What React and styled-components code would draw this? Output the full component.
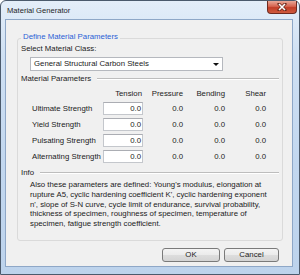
import React from "react";
import styled, { createGlobalStyle } from "styled-components";

const GlobalStyle = createGlobalStyle`
  html, body {
    margin: 0;
    padding: 0;
    background: #ffffff;
  }
  body {
    font-family: "Liberation Sans", Arial, sans-serif;
    font-size: 7.8px;
    color: #1b1b1b;
  }
`;

const Window = styled.div`
  width: 300px;
  height: 275px;
  box-sizing: border-box;
  border: 1px solid #4b5a6c;
  border-radius: 6px 6px 0 0;
  background: linear-gradient(#e4eef9, #cfe0f3 20%, #c2d7ef 60%, #bdd3ec);
  display: flex;
  flex-direction: column;
  padding: 0 6px 7px 4px;
`;

const TitleBar = styled.div`
  height: 18px;
  display: flex;
  justify-content: space-between;
  align-items: flex-start;
`;

const Title = styled.span`
  margin: 5px 0 0 2px;
  font-size: 7.6px;
  line-height: 9px;
  color: #1e1e1e;
`;

const CloseButton = styled.div`
  width: 30px;
  height: 13px;
  margin-right: -4px;
  box-sizing: border-box;
  border: 1px solid #6e2a20;
  border-top: none;
  border-radius: 0 0 4px 4px;
  background: linear-gradient(#e9a898, #d5634f 45%, #c13e28 55%, #cf5a3e);
  display: flex;
  align-items: center;
  justify-content: center;
`;

const Client = styled.div`
  flex: 1;
  border: 1px solid #8ea7c7;
  background: #f0f0f0;
  padding: 18px 9px 4px 11px;
  display: flex;
  flex-direction: column;
`;

const Group = styled.div`
  height: 203px;
  box-sizing: border-box;
  border: 1px solid #dadada;
  border-radius: 3px;
  display: flex;
  flex-direction: column;
  padding-left: 3px;
`;

const Legend = styled.div`
  align-self: flex-start;
  margin: -7px 0 0 0;
  padding: 0 2px;
  background: #f0f0f0;
  color: #2a5fd6;
  line-height: 10px;
`;

const Label = styled.div`
  line-height: 10px;
  margin-top: ${(p) => p.$top || 0}px;
  padding-left: ${(p) => p.$indent || 0}px;
`;

const Combo = styled.div`
  margin: 3px 0 0 9px;
  width: 193px;
  height: 14px;
  box-sizing: border-box;
  border: 1px solid #b5b8be;
  background: #ffffff;
  display: flex;
  align-items: center;
  justify-content: space-between;
  padding: 0 3px 0 3px;
  line-height: 10px;
`;

const Arrow = styled.span`
  width: 0;
  height: 0;
  border-left: 3px solid transparent;
  border-right: 3px solid transparent;
  border-top: 3px solid #111;
`;

const SectionHead = styled.div`
  display: flex;
  align-items: center;
  margin-top: ${(p) => p.$top}px;
  line-height: 10px;
  padding-right: 3px;
`;

const Rule = styled.div`
  flex: 1;
  margin-left: 6px;
  height: 1px;
  background: #bdbdbd;
  border-bottom: 1px solid #ffffff;
`;

const Table = styled.div`
  margin-top: 5px;
  display: grid;
  grid-template-columns: 82px 40px 41px 42px 41px;
  grid-template-rows: 10px repeat(4, 13px);
  row-gap: 3px;
  line-height: 10px;
`;

const Cell = styled.div`
  display: flex;
  align-items: center;
  justify-content: ${(p) => (p.$left ? "flex-start" : "flex-end")};
  padding-left: ${(p) => (p.$left ? 11 : 0)}px;
  padding-right: ${(p) => (p.$left ? 0 : 1)}px;
`;

const Input = styled.div`
  box-sizing: border-box;
  height: 13px;
  border: 1px solid #c4c7cc;
  border-top-color: #abadb3;
  background: #ffffff;
  display: flex;
  align-items: center;
  justify-content: flex-end;
  padding-right: 1px;
`;

const InfoText = styled.div`
  margin-top: 2px;
  padding-left: 9px;
  line-height: 9.8px;
  white-space: nowrap;
`;

const ButtonRow = styled.div`
  margin-top: 7px;
  display: flex;
  justify-content: flex-end;
  gap: 4px;
  padding-right: 4px;
`;

const Button = styled.div`
  width: ${(p) => p.$w}px;
  height: 14px;
  box-sizing: border-box;
  border: 1px solid #7a7a7a;
  border-radius: 3px;
  background: linear-gradient(#f4f4f4, #ebebeb 50%, #dddddd 51%, #d4d4d4);
  display: flex;
  align-items: center;
  justify-content: center;
  line-height: 10px;
`;

const rows = [
  "Ultimate Strength",
  "Yield Strength",
  "Pulsating Strength",
  "Alternating Strength",
];

export default function App() {
  return (
    <>
      <GlobalStyle />
      <Window>
        <TitleBar>
          <Title>Material Generator</Title>
          <CloseButton>
            <svg width="10" height="8" viewBox="0 0 10 8">
              <path d="M2 1 L8 7 M8 1 L2 7" stroke="#6b2a1e" strokeWidth="3" strokeLinecap="square" />
              <path d="M2 1 L8 7 M8 1 L2 7" stroke="#ffffff" strokeWidth="1.6" />
            </svg>
          </CloseButton>
        </TitleBar>
        <Client>
          <Group>
            <Legend>Define Material Parameters</Legend>
            <Label $top={2}>Select Material Class:</Label>
            <Combo>
              <span>General Structural Carbon Steels</span>
              <Arrow />
            </Combo>
            <SectionHead $top={3}>
              Material Parameters
              <Rule />
            </SectionHead>
            <Table>
              <Cell $left />
              <Cell>Tension</Cell>
              <Cell>Pressure</Cell>
              <Cell>Bending</Cell>
              <Cell>Shear</Cell>
              {rows.map((name) => (
                <React.Fragment key={name}>
                  <Cell $left>{name}</Cell>
                  <Input>0.0</Input>
                  <Cell>0.0</Cell>
                  <Cell>0.0</Cell>
                  <Cell>0.0</Cell>
                </React.Fragment>
              ))}
            </Table>
            <SectionHead $top={5}>
              Info
              <Rule />
            </SectionHead>
            <InfoText>
              Also these parameters are defined: Young's modulus, elongation at
              <br />
              rupture A5, cyclic hardening coefficient K', cyclic hardening exponent
              <br />
              n', slope of S-N curve, cycle limit of endurance, survival probability,
              <br />
              thickness of specimen, roughness of specimen, temperature of
              <br />
              specimen, fatigue strength coefficient.
            </InfoText>
          </Group>
          <ButtonRow>
            <Button $w={58}>OK</Button>
            <Button $w={55}>Cancel</Button>
          </ButtonRow>
        </Client>
      </Window>
    </>
  );
}
